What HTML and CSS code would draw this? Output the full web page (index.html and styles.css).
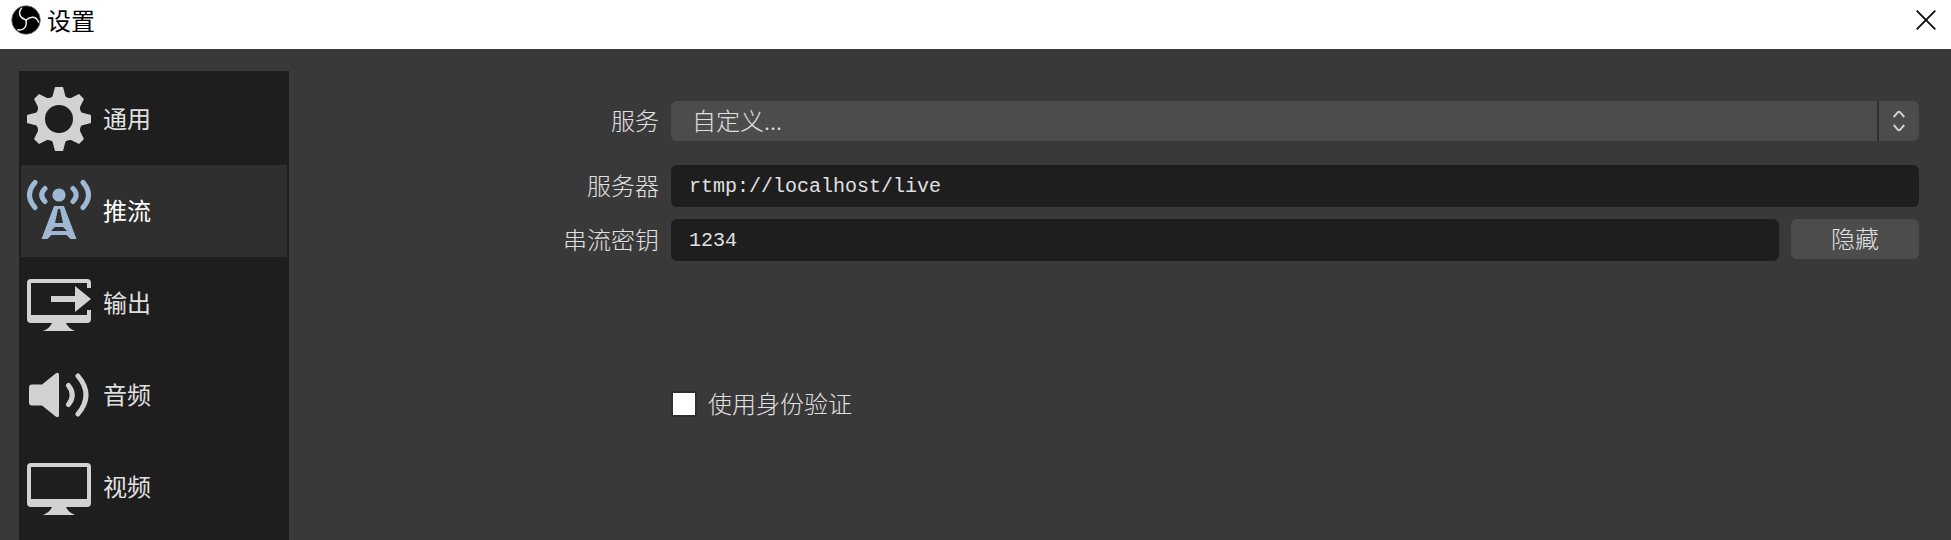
FILE: index.html
```html
<!DOCTYPE html>
<html lang="zh-CN">
<head>
<meta charset="utf-8">
<title>设置</title>
<link rel="stylesheet" href="styles.css">
</head>
<body>
<header class="titlebar">
  <svg class="logo" viewBox="0 0 30 30" aria-hidden="true">
    <circle cx="15" cy="15" r="14.300" fill="#000" stroke="#777" stroke-width=".8"/>
    <g fill="none" stroke="#eee" stroke-width="1.500" stroke-linecap="round">
      <path d="M15 15C9 13 6.500 8 10.500 3.200"/>
      <path d="M15 15C9 13 6.500 8 10.500 3.200" transform="rotate(120 15 15)"/>
      <path d="M15 15C9 13 6.500 8 10.500 3.200" transform="rotate(240 15 15)"/>
    </g>
  </svg>
  <h1 class="title">设置</h1>
  <button class="close" type="button" aria-label="关闭">
    <svg viewBox="0 0 20 20" width="20" height="20"><path d="M.7.700 19.300 19.300M19.300.700.700 19.300" stroke="#111" stroke-width="1.900" fill="none"/></svg>
  </button>
</header>
<div class="content">
  <nav class="sidebar">
    <button class="item" type="button">
      <svg class="icon" viewBox="0 0 64 64"><path fill="#d2d2d2" fill-rule="evenodd" d="M28 0H36L38.500 9.500Q41 11.500 44 11L52 7 57 12 53 20Q52.500 23 54.500 25.500L64 28V36L54.500 38.500Q52.500 41 53 44L57 52 52 57 44 53Q41 52.500 38.500 54.500L36 64H28L25.500 54.500Q23 52.500 20 53L12 57 7 52 11 44Q11.500 41 9.500 38.500L0 36V28L9.500 25.500Q11.500 23 11 20L7 12 12 7 20 11Q23 11.500 25.500 9.500ZM32 18a14 14 0 1 0 0 28 14 14 0 0 0 0-28z"/></svg>
      <span>通用</span>
    </button>
    <button class="item selected" type="button" aria-current="page">
      <svg class="icon" viewBox="0 0 64 64"><g fill="none" stroke="#9fb8d4" stroke-width="5" stroke-linecap="round"><path d="M8 3.500Q-3 16 8 28.500M18 9.500Q11.500 16 18 22.500M56 3.500Q67 16 56 28.500M46 9.500Q52.500 16 46 22.500"/></g><circle cx="32" cy="16" r="6.600" fill="#9fb8d4"/><path fill="#9fb8d4" fill-rule="evenodd" d="M27 27h10l12.500 33h-6l-4-4h-15l-4 4h-6zM31 30l-3 14h8l-3-14zM28 48l-4 4h16l-4-4z"/></svg>
      <span>推流</span>
    </button>
    <button class="item" type="button">
      <svg class="icon" viewBox="0 0 64 64"><path fill="#d2d2d2" d="M4 8h56q4 0 4 4v5h-4v-5H4v32h56v-5h4v9q0 4-4 4H39q2 5 9 8H16q7-3 9-8H4q-4 0-4-4V12q0-4 4-4z"/><path fill="#d2d2d2" d="M24 25h24V15l16 13-16 13V31H24z"/></svg>
      <span>输出</span>
    </button>
    <button class="item" type="button">
      <svg class="icon" viewBox="0 0 64 64"><path fill="#d2d2d2" d="M5 21.500h10L28 11q4-3 4 1v40q0 4-4 1L15 42.500H5q-3 0-3-3v-15q0-3 3-3z"/><path fill="none" stroke="#d2d2d2" stroke-width="5" stroke-linecap="round" d="M41.500 22.500Q49 32 41.500 41.500M51 13Q67 32 51 51"/></svg>
      <span>音频</span>
    </button>
    <button class="item" type="button">
      <svg class="icon" viewBox="0 0 64 64"><path fill="#d2d2d2" fill-rule="evenodd" d="M4 8h56q4 0 4 4v36q0 4-4 4H39q2 5 9 8H16q7-3 9-8H4q-4 0-4-4V12q0-4 4-4zM4 12v32h56V12z"/></svg>
      <span>视频</span>
    </button>
  </nav>
  <form class="form">
    <label class="label" for="service">服务</label>
    <div class="select-box">
      <select class="select" id="service"><option>自定义...</option></select>
      <span class="arrows"><svg viewBox="0 0 12 24" width="12" height="24"><path d="M.7 8 5 3.200q1-1 2 0L11.300 8M.7 16 5 20.800q1 1 2 0L11.300 16" fill="none" stroke="#d2d2d2" stroke-width="2"/></svg></span>
    </div>
    <label class="label server" for="server">服务器</label>
    <input class="input server" id="server" type="text" value="rtmp://localhost/live">
    <label class="label key" for="key">串流密钥</label>
    <div class="key-row key">
      <input class="input" id="key" type="text" value="1234">
      <button class="hide" type="button">隐藏</button>
    </div>
    <div class="auth">
      <input class="check" id="auth" type="checkbox">
      <label class="auth-label" for="auth">使用身份验证</label>
    </div>
  </form>
</div>
</body>
</html>
```
FILE: styles.css
```css
* { box-sizing: border-box; }
body {
  margin: 0;
  height: 100vh;
  display: flex;
  flex-direction: column;
  overflow: hidden;
  background: #3a393a;
  color: #e1e0e1;
  font: 24px/32px "Noto Sans CJK SC", sans-serif;
}
button, input, select { font: inherit; color: inherit; border: 0; margin: 0; }
.titlebar {
  display: flex;
  align-items: center;
  height: 49px;
  flex: none;
  padding: 0 15px 9px 11px;
  background: #fff;
  color: #000;
}
.logo { width: 30px; height: 30px; }
.title { margin: 0 auto 0 6px; font-size: 24px; font-weight: 400; }
.close { display: flex; padding: 0; background: none; }
.content { display: flex; flex: 1; min-height: 0; }
.sidebar {
  flex: none;
  width: 270px;
  margin: 22px 0 0 19px;
  padding: 2px;
  overflow: hidden;
  background: #1f1e1f;
}
.item {
  display: flex;
  align-items: center;
  gap: 12px;
  width: 100%;
  height: 92px;
  padding: 0 6px;
  background: none;
  text-align: left;
}
.item span, .label, .auth-label { padding-bottom: 2px; }
.item.selected { background: #302f30; color: #fff; }
.icon { width: 64px; height: 64px; flex: none; }
.form {
  flex: 1;
  display: grid;
  grid-template-columns: 358px 1fr;
  column-gap: 12px;
  align-content: start;
  align-items: center;
  padding: 52px 32px 0 12px;
  font-weight: 300;
}
.label { text-align: right; }
.select-box { position: relative; }
.select {
  display: block;
  width: 100%;
  height: 40px;
  padding: 0 54px 2px 21px;
  border-radius: 6px;
  background: #4c4c4c;
  appearance: none;
}
.arrows {
  position: absolute;
  top: 0;
  right: 0;
  bottom: 0;
  width: 42px;
  display: grid;
  place-items: center;
  border-left: 2px solid #2f2f2f;
  pointer-events: none;
}
.input {
  width: 100%;
  min-width: 0;
  height: 42px;
  padding: 0 18px;
  border-radius: 6px;
  background: #1f1e1f;
  font: 20px "Liberation Mono", monospace;
}
.server { margin-top: 24px; }
.key { margin-top: 12px; }
.key-row { display: flex; gap: 12px; }
.hide {
  flex: none;
  width: 128px;
  height: 40px;
  padding: 0 0 2px;
  border-radius: 6px;
  background: #4c4c4c;
}
.auth {
  grid-column: 2;
  display: flex;
  align-items: center;
  gap: 11px;
  margin-top: 126px;
}
.check {
  appearance: none;
  width: 26px;
  height: 26px;
  border: 2px solid #302f30;
  background: #fff;
}
```
